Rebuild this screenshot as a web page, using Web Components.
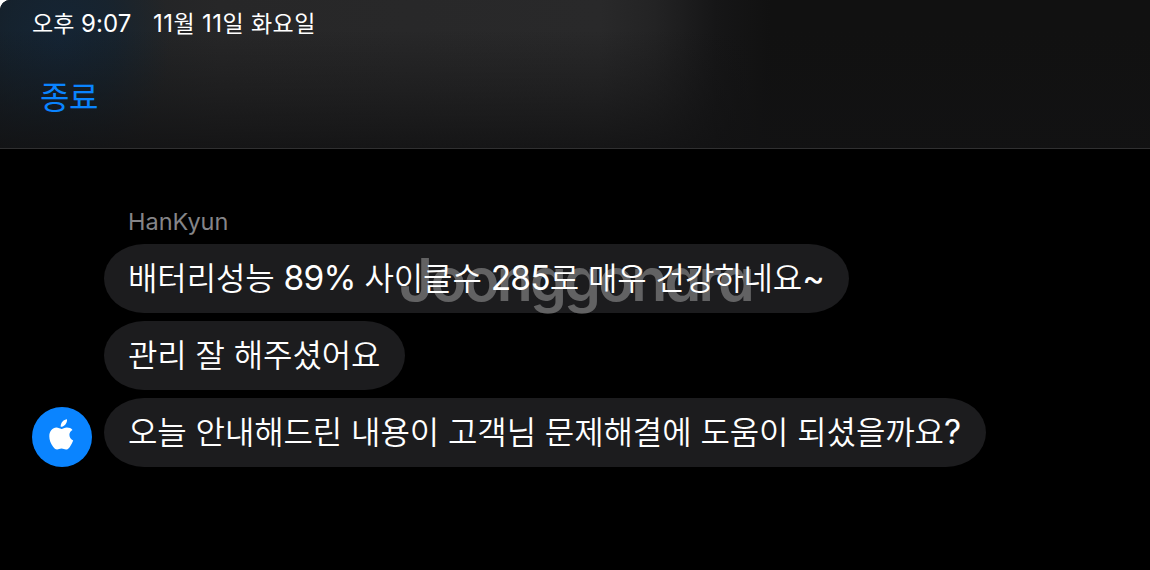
<!DOCTYPE html>
<html lang="ko">
<head>
<meta charset="utf-8">
<title>Chat</title>
<style>
html,body{margin:0;background:#000;width:1150px;height:570px;overflow:hidden}
body{font-family:Inter,"Noto Sans CJK KR",sans-serif;color:#fff}
</style>
</head>
<body>
<chat-app></chat-app>
<script>
const define = (name, html) => customElements.define(name, class extends HTMLElement {
  constructor() {
    super();
    const t = document.createElement('template');
    t.innerHTML = html;
    this.attachShadow({mode: 'open'}).append(t.content.cloneNode(true));
  }
});

define('status-bar', `<style>
:host{display:flex;padding-left:32px;height:47px;align-items:center;font-size:23px;line-height:30px;white-space:pre;font-weight:400}
::slotted(*){display:block}
</style><slot></slot>`);

define('nav-header', `<style>
:host{display:block;box-sizing:border-box;height:149px;border-bottom:1px solid #303031;overflow:hidden;
background:
linear-gradient(180deg,transparent 20%,rgba(18,18,19,.4) 60%,rgba(18,18,19,.85) 100%),
radial-gradient(ellipse 110px 140px at 60px 42px,rgba(20,37,54,.95) 0,rgba(20,36,50,.7) 50%,transparent 100%),
linear-gradient(90deg,#171d23 0,#222426 130px,#272728 220px,#29292a 600px,#232324 655px,#161617 715px,#111 770px)}
.action{padding:31px 0 0 40px;color:#0a84ff;font-size:32px;line-height:40px;font-weight:400;letter-spacing:-.4px}
</style><slot name="status"></slot><div class="action"><slot></slot></div>`);

define('chat-bubble', `<style>
:host{display:flex;align-items:center;box-sizing:border-box;width:var(--w);height:69px;padding:0 0 0 24px;background:#1c1c1e;border-radius:40px/34.5px;font-size:32px;line-height:48px;font-weight:350;letter-spacing:-.11px;white-space:nowrap}
</style><span><slot></slot></span>`);

define('apple-avatar', `<style>
:host{display:flex;width:60px;height:60px;border-radius:50%;background:#0a84ff;align-items:center;justify-content:center}
svg{display:block;margin:-5px 1px 0 0}
</style><svg width="25" height="31" viewBox="0 0 25 31"><path fill="#fff" d="M18 .3c.3 2.200-.6 4.100-1.800 5.500-1.300 1.400-2.900 2.100-4.500 2-.2-2 .6-4 1.900-5.300C14.800 1.200 16.500.4 18 .3ZM23.500 10.900c-2.200 1.300-3.200 3.100-3.100 5.200.1 2.500 1.500 4.500 3.800 5.500-.8 2.300-2 4.500-3.400 6.400-1 1.400-2.100 2.600-3.900 2.600-1.700 0-2.400-1-4.400-1-2.100 0-2.800 1-4.400 1-1.700 0-2.900-1.300-4-2.800C1.700 24.700.3 20.900.3 17.300c0-5.200 3.300-8.700 7.100-8.700 2 0 3.700 1.300 5 1.300 1.200 0 3.100-1.400 5.500-1.400 2.300 0 4.300.8 5.600 2.400Z"/></svg>`);

define('water-mark', `<style>
:host{position:absolute;left:295px;top:0;font:600 59px/72px Inter,sans-serif;font-feature-settings:"cv11";letter-spacing:-2.8px;color:rgba(255,255,255,.31);pointer-events:none;white-space:nowrap}
</style><slot></slot>`);

define('chat-app', `<style>
:host{display:block;height:570px;background:#fff}
.screen{height:570px;background:#000;border-radius:10px 0 0 0;overflow:hidden}
main{display:grid;grid-template-columns:60px 1fr;column-gap:12px;padding:58px 0 0 32px}
.name{grid-column:2;padding-left:24px;height:37px;font-size:23.5px;line-height:30px;font-weight:400;color:#858588;letter-spacing:0}
.stack{grid-column:2;grid-row:2;display:flex;flex-direction:column;gap:8px}
.first{position:relative}
apple-avatar{align-self:end;grid-column:1;grid-row:2}
.n{font-size:33.5px;font-weight:400;letter-spacing:-.8px}
.tilde{font-size:34px;font-weight:400}
.t{font-size:24px}
.time{width:121px;letter-spacing:.1px}
.date{letter-spacing:.45px}
</style>
<div class="screen">
<nav-header><status-bar slot="status"><span class="time">오후 <span class="t">9:07</span></span><span class="date"><span class="t">11</span>월 <span class="t">11</span>일 화요일</span></status-bar>종료</nav-header>
<main>
<div class="name">HanKyun</div>
<apple-avatar></apple-avatar>
<div class="stack">
<div class="first"><chat-bubble style="--w:745px">배터리성능 <span class="n">89%</span> 사이클수 <span class="n">285</span>로 매우 건강하네요<span class="tilde">~</span></chat-bubble><water-mark>Joonggonara</water-mark></div>
<chat-bubble style="--w:301px">관리 잘 해주셨어요</chat-bubble>
<chat-bubble style="--w:882px">오늘 안내해드린 내용이 고객님 문제해결에 도움이 되셨을까요<span class="n">?</span></chat-bubble>
</div>
</main>
</div>`);
</script>
</body>
</html>
